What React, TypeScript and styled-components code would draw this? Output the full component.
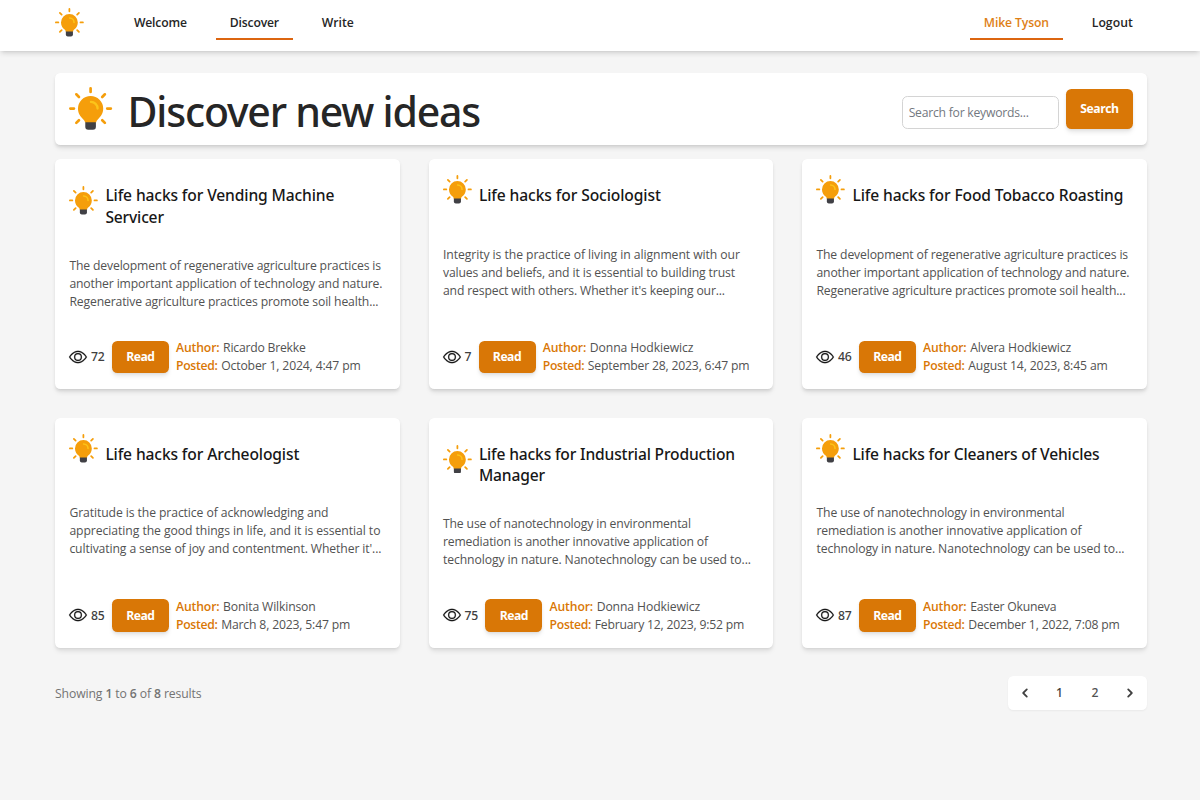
import React from "react";
import styled, { createGlobalStyle } from "styled-components";
import { BsEye } from "react-icons/bs";

const GlobalStyle = createGlobalStyle`
  *, *::before, *::after { box-sizing: border-box; }
  body {
    margin: 0;
    min-height: 100vh;
    background: #f5f5f5;
    color: #262626;
    font: 400 12.2px/18px "Open Sans", "Noto Sans", sans-serif;
  }
  h1, h2, p { margin: 0; }
  button, input { font: inherit; }
`;

const cardShadow = "0 3.6px 5.4px -1px rgba(0,0,0,.1), 0 1.8px 3.6px -1.8px rgba(0,0,0,.1)";

const Text = styled.span<{ $track?: number }>`
  letter-spacing: ${({ $track = -0.13 }) => $track}px;
  white-space: nowrap;
`;

const Header = styled.header`
  height: 51px;
  background: #fff;
  box-shadow: 0 3.6px 5.4px -1px rgba(0, 0, 0, 0.14), 0 1.8px 3.6px -1.8px rgba(0, 0, 0, 0.14);
`;

const Container = styled.div`
  width: 1092px;
  margin-left: 55px;
`;

const Nav = styled(Container)`
  display: flex;
  justify-content: space-between;
`;

const NavGroup = styled.nav`
  display: flex;
  gap: 14.4px;
`;

const Brand = styled.a`
  display: flex;
  margin: 8px 21.2px 0 0;
`;

const NavLink = styled.a<{ $active?: boolean; $accent?: boolean; $width: number }>`
  display: flex;
  justify-content: center;
  width: ${({ $width }) => $width}px;
  height: 40px;
  padding-top: 13.6px;
  border-bottom: 2px solid ${({ $active }) => ($active ? "#dc6510" : "transparent")};
  color: ${({ $accent }) => ($accent ? "#de7f17" : "#262626")};
  font-weight: 600;
`;

const Banner = styled.section`
  display: flex;
  align-items: flex-start;
  height: 72px;
  margin-top: 22px;
  padding: 14px 14.4px;
  border-radius: 5.4px;
  background: #fff;
  box-shadow: ${cardShadow};
`;

const PageTitle = styled.h1`
  margin: 3px 0 0 15px;
  font-family: "Noto Sans", sans-serif;
  font-size: 41px;
  font-weight: 500;
  line-height: 43px;
  letter-spacing: -1.2px;
  white-space: nowrap;
`;

const SearchForm = styled.form`
  display: flex;
  align-items: flex-end;
  gap: 7.2px;
  margin: 2px 0 0 auto;
`;

const SearchInput = styled.input`
  width: 157.4px;
  height: 33px;
  padding: 0 6px;
  border: 1px solid #d4d4d4;
  border-radius: 5.4px;
  background: #fff;
  letter-spacing: -0.24px;
  &::placeholder { color: #737880; opacity: 1; }
`;

const Button = styled.button<{ $large?: boolean }>`
  flex: none;
  width: ${({ $large }) => ($large ? 66.4 : 57)}px;
  height: ${({ $large }) => ($large ? 39.5 : 32.5)}px;
  padding: 0;
  border: 0;
  border-radius: 5.4px;
  background: #d97706;
  color: #fff;
  font-weight: 700;
  letter-spacing: ${({ $large }) => ($large ? -0.43 : -0.5)}px;
  box-shadow: ${cardShadow};
`;

const Grid = styled.main`
  display: grid;
  grid-template-columns: repeat(3, 1fr);
  gap: 28.6px;
  margin-top: 14px;
`;

const Card = styled.article`
  display: flex;
  flex-direction: column;
  height: 230px;
  padding: 26px 14.4px 14px;
  border-radius: 5.4px;
  background: #fff;
  box-shadow: ${cardShadow};
`;

const CardHead = styled.div<{ $tall: boolean }>`
  display: flex;
  gap: 7.2px;
  height: ${({ $tall }) => ($tall ? 71.6 : 60.8)}px;
  > svg { margin-top: ${({ $tall }) => ($tall ? 1 : -9.6)}px; }
`;

const CardTitle = styled.h2`
  display: flex;
  flex-direction: column;
  color: #171717;
  font-family: "Noto Sans", sans-serif;
  font-size: 15.6px;
  font-weight: 500;
  line-height: 21.6px;
`;

const Excerpt = styled.p`
  display: flex;
  flex-direction: column;
  color: #525252;
`;

const CardFoot = styled.footer`
  display: flex;
  align-items: center;
  gap: 7.2px;
  margin-top: auto;
`;

const Views = styled.span`
  display: flex;
  align-items: center;
  gap: 3.6px;
  color: #404040;
  font-family: "Noto Sans", sans-serif;
  font-weight: 500;
  svg {
    margin-top: -1px;
    color: #171717;
    stroke: #171717;
    stroke-width: 0.15px;
    overflow: visible;
  }
`;

const Meta = styled.div`
  display: flex;
  flex-direction: column;
  color: #525252;
`;

const MetaRow = styled.div`
  display: flex;
  gap: 3.6px;
`;

const Label = styled(Text)`
  color: #d97706;
  font-weight: 600;
`;

const PageFoot = styled.div`
  display: flex;
  justify-content: space-between;
  align-items: center;
  margin-top: 28px;
`;

const Summary = styled.p`
  padding-top: 2px;
  color: #737373;
  letter-spacing: -0.11px;
  b { font-weight: 600; }
`;

const Pager = styled.div`
  display: flex;
  height: 34.5px;
  border-radius: 5.4px;
  background: #fff;
  box-shadow: 0 1px 2px rgba(0, 0, 0, 0.05);
`;

const PagerCell = styled.a<{ $width: number; $current?: boolean }>`
  display: flex;
  align-items: center;
  justify-content: center;
  width: ${({ $width }) => $width}px;
  color: ${({ $current }) => ($current ? "#404040" : "#525252")};
  font-family: "Noto Sans", sans-serif;
  font-weight: 500;
`;

const BulbSvg = styled.svg`
  flex: none;
  display: block;
`;

function Bulb({ size }: { size: number }) {
  return (
    <BulbSvg width={size} height={size} viewBox="0 0 130 130">
      <g stroke="#f59e0b" strokeWidth="8" strokeLinecap="round">
        <path d="M65 4v11M4 65h11M115 65h11M22 22l8 8M108 22l-8 8M22 108l8-8M108 108l-8-8" />
      </g>
      <path d="M49 104h32v16a9 9 0 0 1-9 9H58a9 9 0 0 1-9-9z" fill="#404045" />
      <path d="M65 27a38 38 0 0 1 38 38c0 15-8 25-15 31-4 4-6 6-6 10H48c0-4-2-6-6-10-7-6-15-16-15-31a38 38 0 0 1 38-38z" fill="#f59e0b" />
      <path d="M66 45a20 20 0 0 1 20 20" fill="none" stroke="#fcc419" strokeWidth="7" strokeLinecap="round" />
    </BulbSvg>
  );
}

function Chevron({ flip }: { flip?: boolean }) {
  return (
    <svg width="18" height="18" viewBox="0 0 20 20" fill="#404040">
      {flip ? (
        <path fillRule="evenodd" clipRule="evenodd" d="M7.293 14.707a1 1 0 010-1.414L10.586 10 7.293 6.707a1 1 0 011.414-1.414l4 4a1 1 0 010 1.414l-4 4a1 1 0 01-1.414 0z" />
      ) : (
        <path fillRule="evenodd" clipRule="evenodd" d="M12.707 5.293a1 1 0 010 1.414L9.414 10l3.293 3.293a1 1 0 01-1.414 1.414l-4-4a1 1 0 010-1.414l4-4a1 1 0 011.414 0z" />
      )}
    </svg>
  );
}

type Line = [text: string, track: number];

interface Idea {
  title: Line[];
  excerpt: Line[];
  views: number;
  author: Line;
  posted: Line;
}

const regenerative: Line[] = [
  ["The development of regenerative agriculture practices is", -0.143],
  ["another important application of technology and nature.", -0.139],
  ["Regenerative agriculture practices promote soil health...", -0.14],
];

const nanotech: Line[] = [
  ["The use of nanotechnology in environmental", -0.131],
  ["remediation is another innovative application of", -0.148],
  ["technology in nature. Nanotechnology can be used to...", -0.087],
];

const ideas: Idea[] = [
  {
    title: [["Life hacks for Vending Machine", -0.12], ["Servicer", -0.16]],
    excerpt: regenerative,
    views: 72,
    author: ["Ricardo Brekke", -0.214],
    posted: ["October 1, 2024, 4:47 pm", -0.143],
  },
  {
    title: [["Life hacks for Sociologist", -0.087]],
    excerpt: [
      ["Integrity is the practice of living in alignment with our", -0.068],
      ["values and beliefs, and it is essential to building trust", -0.123],
      ["and respect with others. Whether it's keeping our...", -0.145],
    ],
    views: 7,
    author: ["Donna Hodkiewicz", -0.108],
    posted: ["September 28, 2023, 6:47 pm", -0.18],
  },
  {
    title: [["Life hacks for Food Tobacco Roasting", -0.107]],
    excerpt: regenerative,
    views: 46,
    author: ["Alvera Hodkiewicz", -0.106],
    posted: ["August 14, 2023, 8:45 am", -0.12],
  },
  {
    title: [["Life hacks for Archeologist", -0.12]],
    excerpt: [
      ["Gratitude is the practice of acknowledging and", -0.096],
      ["appreciating the good things in life, and it is essential to", -0.068],
      ["cultivating a sense of joy and contentment. Whether it'...", -0.111],
    ],
    views: 85,
    author: ["Bonita Wilkinson", -0.157],
    posted: ["March 8, 2023, 5:47 pm", -0.168],
  },
  {
    title: [["Life hacks for Industrial Production", -0.16], ["Manager", -0.17]],
    excerpt: nanotech,
    views: 75,
    author: ["Donna Hodkiewicz", -0.108],
    posted: ["February 12, 2023, 9:52 pm", -0.194],
  },
  {
    title: [["Life hacks for Cleaners of Vehicles", -0.15]],
    excerpt: nanotech,
    views: 87,
    author: ["Easter Okuneva", -0.23],
    posted: ["December 1, 2022, 7:08 pm", -0.164],
  },
];

function Lines({ lines }: { lines: Line[] }) {
  return (
    <>
      {lines.map(([text, track]) => (
        <Text key={text} $track={track}>{text}</Text>
      ))}
    </>
  );
}

function IdeaCard({ idea }: { idea: Idea }) {
  return (
    <Card>
      <CardHead $tall={idea.title.length > 1}>
        <Bulb size={28.8} />
        <CardTitle><Lines lines={idea.title} /></CardTitle>
      </CardHead>
      <Excerpt><Lines lines={idea.excerpt} /></Excerpt>
      <CardFoot>
        <Views>
          <BsEye size={18} />
          <Text $track={-0.15}>{idea.views}</Text>
        </Views>
        <Button>Read</Button>
        <Meta>
          <MetaRow><Label $track={-0.129}>Author:</Label><Lines lines={[idea.author]} /></MetaRow>
          <MetaRow><Label $track={-0.3}>Posted:</Label><Lines lines={[idea.posted]} /></MetaRow>
        </Meta>
      </CardFoot>
    </Card>
  );
}

export default function App() {
  return (
    <>
      <GlobalStyle />
      <Header>
        <Nav>
          <NavGroup>
            <Brand><Bulb size={28.8} /></Brand>
            <NavLink $width={82}><Text $track={-0.155}>Welcome</Text></NavLink>
            <NavLink $width={77.2} $active><Text $track={-0.193}>Discover</Text></NavLink>
            <NavLink $width={60.9}><Text $track={0}>Write</Text></NavLink>
          </NavGroup>
          <NavGroup>
            <NavLink $width={93.5} $active $accent><Text $track={-0.132}>Mike Tyson</Text></NavLink>
            <NavLink $width={69.5}><Text $track={0.03}>Logout</Text></NavLink>
          </NavGroup>
        </Nav>
      </Header>
      <Container>
        <Banner>
          <Bulb size={43.2} />
          <PageTitle>Discover new ideas</PageTitle>
          <SearchForm>
            <SearchInput placeholder="Search for keywords..." />
            <Button type="button" $large>Search</Button>
          </SearchForm>
        </Banner>
        <Grid>
          {ideas.map((idea, i) => <IdeaCard key={i} idea={idea} />)}
        </Grid>
        <PageFoot>
          <Summary>Showing <b>1</b> to <b>6</b> of <b>8</b> results</Summary>
          <Pager>
            <PagerCell $width={33.8}><Chevron /></PagerCell>
            <PagerCell $width={35.2} $current>1</PagerCell>
            <PagerCell $width={35.5}>2</PagerCell>
            <PagerCell $width={34.3}><Chevron flip /></PagerCell>
          </Pager>
        </PageFoot>
      </Container>
    </>
  );
}
